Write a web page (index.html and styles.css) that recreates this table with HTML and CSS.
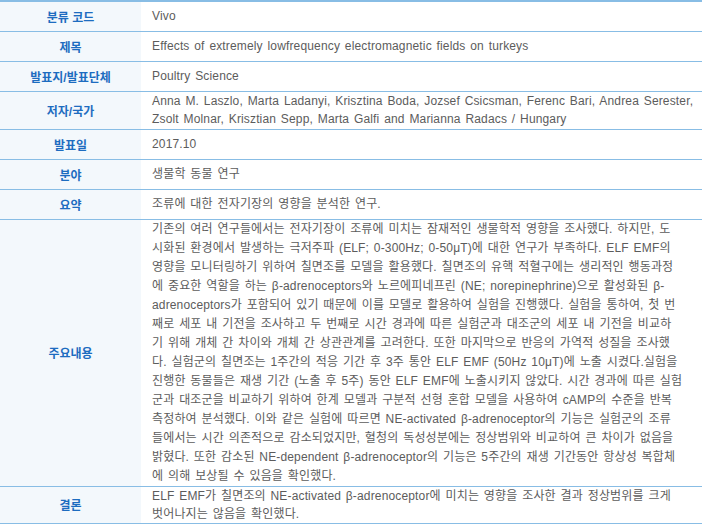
FILE: index.html
```html
<!DOCTYPE html>
<html lang="ko">

<head>
    <meta charset="UTF-8">
    <meta name="viewport" content="width=device-width, initial-scale=1.0">
    <title>연구 정보</title>
    <link rel="stylesheet" href="styles.css">
</head>

<body>
    <table class="info-table">
        <tr>
            <th>분류 코드</th>
            <td>Vivo</td>
        </tr>
        <tr>
            <th>제목</th>
            <td>Effects of extremely lowfrequency electromagnetic fields on turkeys</td>
        </tr>
        <tr>
            <th>발표지/발표단체</th>
            <td>Poultry Science</td>
        </tr>
        <tr class="authors">
            <th>저자/국가</th>
            <td>Anna M. Laszlo, Marta Ladanyi, Krisztina Boda, Jozsef Csicsman, Ferenc Bari, Andrea Serester,<br>
                Zsolt Molnar, Krisztian Sepp, Marta Galfi and Marianna Radacs / Hungary</td>
        </tr>
        <tr>
            <th>발표일</th>
            <td>2017.10</td>
        </tr>
        <tr>
            <th>분야</th>
            <td>생물학 동물 연구</td>
        </tr>
        <tr>
            <th>요약</th>
            <td>조류에 대한 전자기장의 영향을 분석한 연구.</td>
        </tr>
        <tr>
            <th>주요내용</th>
            <td>
                기존의 여러 연구들에서는 전자기장이 조류에 미치는 잠재적인 생물학적 영향을 조사했다. 하지만, 도<br>
                시화된 환경에서 발생하는 극저주파 (ELF; 0-300Hz; 0-50μT)에 대한 연구가 부족하다. ELF EMF의<br>
                영향을 모니터링하기 위하여 칠면조를 모델을 활용했다. 칠면조의 유핵 적혈구에는 생리적인 행동과정<br>
                에 중요한 역할을 하는 β-adrenoceptors와 노르에피네프린 (NE; norepinephrine)으로 활성화된 β-<br>
                adrenoceptors가 포함되어 있기 때문에 이를 모델로 활용하여 실험을 진행했다. 실험을 통하여, 첫 번<br>
                째로 세포 내 기전을 조사하고 두 번째로 시간 경과에 따른 실험군과 대조군의 세포 내 기전을 비교하<br>
                기 위해 개체 간 차이와 개체 간 상관관계를 고려한다. 또한 마지막으로 반응의 가역적 성질을 조사했<br>
                다. 실험군의 칠면조는 1주간의 적응 기간 후 3주 통안 ELF EMF (50Hz 10μT)에 노출 시켰다.실험을<br>
                진행한 동물들은 재생 기간 (노출 후 5주) 동안 ELF EMF에 노출시키지 않았다. 시간 경과에 따른 실험<br>
                군과 대조군을 비교하기 위하여 한계 모델과 구분적 선형 혼합 모델을 사용하여 cAMP의 수준을 반복<br>
                측정하여 분석했다. 이와 같은 실험에 따르면 NE-activated β-adrenoceptor의 기능은 실험군의 조류<br>
                들에서는 시간 의존적으로 감소되었지만, 혈청의 독성성분에는 정상범위와 비교하여 큰 차이가 없음을<br>
                밝혔다. 또한 감소된 NE-dependent β-adrenoceptor의 기능은 5주간의 재생 기간동안 항상성 복합체<br>
                에 의해 보상될 수 있음을 확인했다.
            </td>
        </tr>
        <tr class="last">
            <th>결론</th>
            <td>ELF EMF가 칠면조의 NE-activated β-adrenoceptor에 미치는 영향을 조사한 결과 정상범위를 크게<br>
                벗어나지는 않음을 확인했다.</td>
        </tr>
    </table>
</body>

</html>
```

FILE: styles.css
```css
* {
    margin: 0;
    padding: 0;
    box-sizing: border-box;
}

body {
    font-family: 'Liberation Sans', 'Noto Sans CJK KR', sans-serif;
    font-size: 12px;
    background-color: #fff;
}

.info-table {
    width: 100%;
    border-collapse: collapse;
    border-top: 2px solid #88bde5;
}

.info-table tr {
    border-bottom: 1px solid #88bde5;
}

.info-table th {
    width: 141px;
    height: 30px;
    background-color: #f3f8fc;
    color: #1d6cc0;
    font-weight: bold;
    text-align: center;
    vertical-align: middle;
}

.info-table td {
    height: 30px;
    padding: 0 0 0 11px;
    color: #5c5c5c;
    line-height: 19px;
    vertical-align: middle;
    letter-spacing: 0.15px;
    word-spacing: 1.3px;
}

.info-table .authors td {
    line-height: 18.5px;
}

.info-table .last td {
    line-height: 18px;
}
```
